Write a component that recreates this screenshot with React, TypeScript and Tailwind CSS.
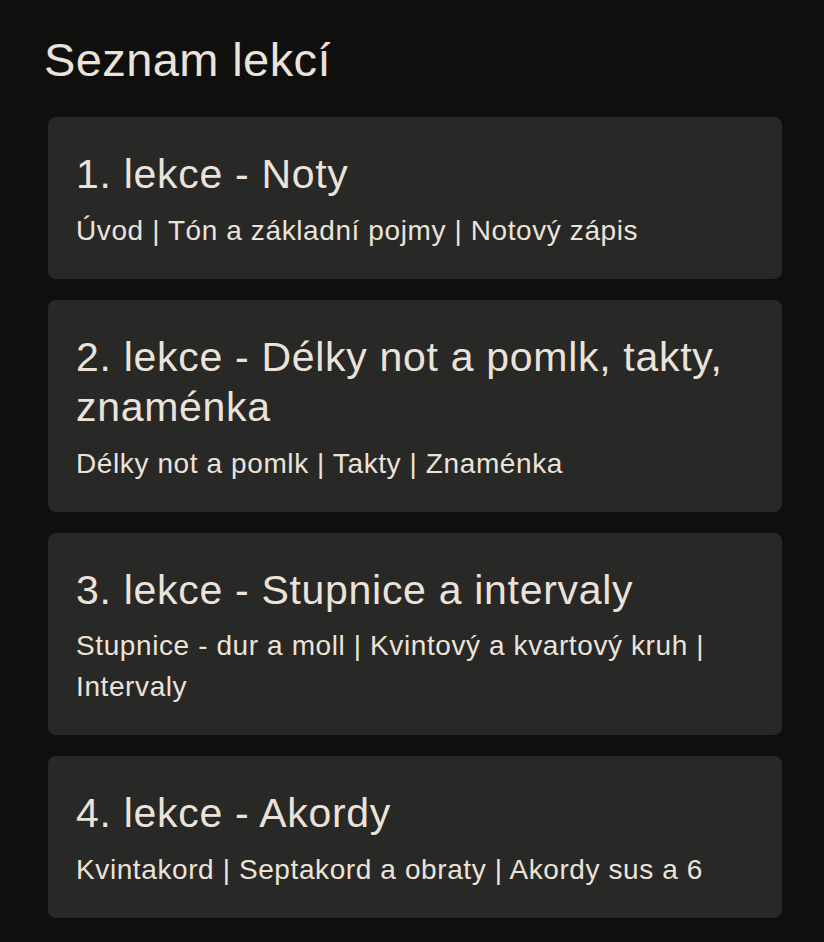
const lessons = [
  {
    title: "1. lekce - Noty",
    topics: "Úvod | Tón a základní pojmy | Notový zápis",
  },
  {
    title: "2. lekce - Délky not a pomlk, takty, znaménka",
    topics: "Délky not a pomlk | Takty | Znaménka",
  },
  {
    title: "3. lekce - Stupnice a intervaly",
    topics: "Stupnice - dur a moll | Kvintový a kvartový kruh | Intervaly",
  },
  {
    title: "4. lekce - Akordy",
    topics: "Kvintakord | Septakord a obraty | Akordy sus a 6",
  },
]

const App = () => {
  return (
    <div className="min-h-[942px] w-full bg-[#0f0f0e] text-[#ebe3da] font-['Liberation_Sans',Arial,sans-serif] pt-[32px] pb-[27px]">
      <h1 className="pl-[44px] text-[47px] leading-[56px] tracking-[0.4px] font-normal">
        Seznam lekcí
      </h1>

      <ul className="mt-[29px] ml-[48px] w-[734px] flex flex-col gap-[21px]">
        {lessons.map((lesson) => (
          <li
            key={lesson.title}
            className="rounded-[8px] bg-[#282827] px-[28px] pt-[32px] pb-[28px]"
          >
            <h2 className="text-[41px] leading-[50.5px] tracking-[0.7px] font-normal">
              {lesson.title}
            </h2>
            <p className="mt-[10px] text-[28px] leading-[41px] tracking-[0.6px]">
              {lesson.topics}
            </p>
          </li>
        ))}
      </ul>
    </div>
  )
}

export default App
